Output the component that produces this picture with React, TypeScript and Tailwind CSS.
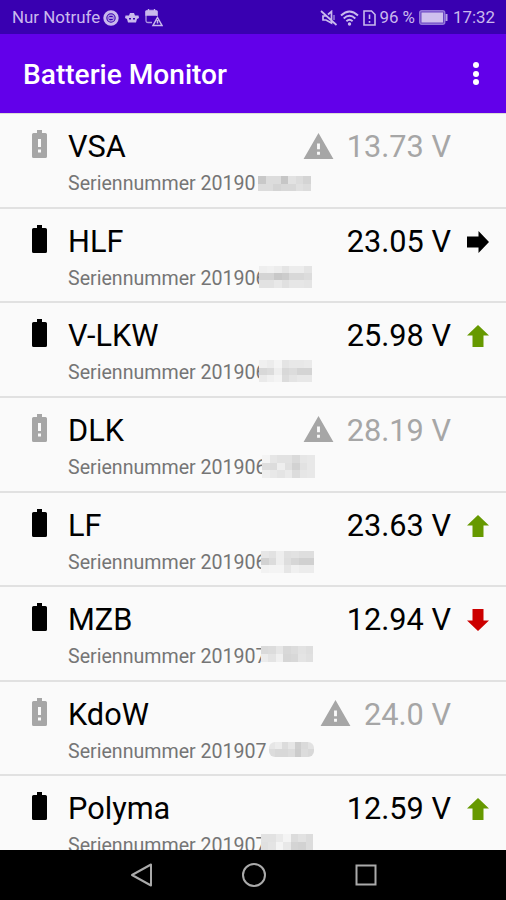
import { clsx } from 'clsx';

type Trend = 'up' | 'down' | 'steady' | 'unknown';

interface Battery {
  name: string;
  serial: string;
  voltage: string;
  trend: Trend;
  mask: { className: string; cells: string[] };
}

// Each mask entry is a run of grey levels, one hex digit pair per tile
const batteries: Battery[] = [
  {
    name: 'VSA',
    serial: '20190',
    voltage: '13.73 V',
    trend: 'unknown',
    mask: {
      className: 'left-[190px] top-[4px] w-[53px] h-[15px]',
      cells: ['c8 dc dc c6 e2 dc d4', 'dc dc d4 d8 d8 e0 dc'],
    },
  },
  {
    name: 'HLF',
    serial: '201906',
    voltage: '23.05 V',
    trend: 'steady',
    mask: {
      className: 'left-[191px] top-[-1px] w-[53px] h-[22px]',
      cells: ['ee f0 ec e4 ec ec e4', 'd4 d4 c8 cc d8 d8 dc', 'e2 e2 e8 e0 e6 e6 e4'],
    },
  },
  {
    name: 'V-LKW',
    serial: '201906',
    voltage: '25.98 V',
    trend: 'up',
    mask: {
      className: 'left-[191px] top-[-1px] w-[53px] h-[22px]',
      cells: ['f0 ec f4 e4 e8 e8 ea', 'd8 dc ee d8 dc d4 d4', 'ea f0 f4 dc e4 e8 e8'],
    },
  },
  {
    name: 'DLK',
    serial: '201906',
    voltage: '28.19 V',
    trend: 'unknown',
    mask: {
      className: 'left-[194px] top-[-1px] w-[53px] h-[23px]',
      cells: ['f4 e6 e2 e2 da e6 e8', 'de dc ee e0 d2 e2 e8', 'ee e8 e4 ea dc e6 e8'],
    },
  },
  {
    name: 'LF',
    serial: '201906',
    voltage: '23.63 V',
    trend: 'up',
    mask: {
      className: 'left-[193px] top-[0px] w-[53px] h-[22px]',
      cells: ['e6 e2 ee e0 e2 de de', 'd2 dc ee de d6 d0 d0', 'f2 f4 f4 e6 f0 ec ec'],
    },
  },
  {
    name: 'MZB',
    serial: '201907',
    voltage: '12.94 V',
    trend: 'down',
    mask: {
      className: 'left-[193px] top-[1px] w-[52px] h-[16px]',
      cells: ['da dc e6 d8 dc e2 de', 'ec e4 f0 d6 d8 e4 e0'],
    },
  },
  {
    name: 'KdoW',
    serial: '201907',
    voltage: '24.0 V',
    trend: 'unknown',
    mask: {
      className: 'left-[201px] top-[2px] w-[45px] h-[15px] rounded-md',
      cells: ['e6 ec dc e6 ce da e2', 'dc d8 d8 dc cc dc d8'],
    },
  },
  {
    name: 'Polyma',
    serial: '201907',
    voltage: '12.59 V',
    trend: 'up',
    mask: {
      className: 'left-[193px] top-[0px] w-[52px] h-[16px]',
      cells: ['e2 e2 ea f4 dc e2 dc', 'e0 e4 f4 e8 d4 d2 dc'],
    },
  },
];

function BatteryIcon({ alert }: { alert: boolean }) {
  return (
    <svg viewBox="0 0 15 28" className={clsx('h-7 w-[15px]', alert ? 'text-[#a6a6a6]' : 'text-black')}>
      <path
        fill="currentColor"
        fillRule="evenodd"
        d={
          alert
            ? 'M5 0h5v3h3.4Q15 3 15 4.5v22Q15 28 13.4 28H1.6Q0 28 0 26.5V4.5Q0 3 1.6 3H5zM6 9v8h3V9zM6 19.5v3h3v-3z'
            : 'M5 0h5v3h3.4Q15 3 15 4.5v22Q15 28 13.4 28H1.6Q0 28 0 26.5V4.5Q0 3 1.6 3H5z'
        }
      />
    </svg>
  );
}

function WarningIcon() {
  return (
    <svg viewBox="0 0 31 27" className="mb-[3px] h-[26px] w-[31px] text-[#a6a6a6]">
      <path fill="currentColor" fillRule="evenodd" d="M15.5 0 31 27H0zM14 11v6h3v-6zM14 19.5v3h3v-3z" />
    </svg>
  );
}

function TrendArrow({ trend }: { trend: Trend }) {
  if (trend === 'unknown') return null;
  return (
    <svg
      viewBox="0 0 22 22"
      className={clsx(
        'size-[22px]',
        trend === 'up' && 'text-[#669900]',
        trend === 'down' && 'rotate-180 text-[#cc0000]',
        trend === 'steady' && 'rotate-90 text-black',
      )}
    >
      <path fill="currentColor" d="M11 0 22 10.5H16.5V22H5.5V10.5H0z" />
    </svg>
  );
}

function SerialMask({ className, cells }: Battery['mask']) {
  return (
    <span className={clsx('absolute flex flex-col overflow-hidden', className)}>
      {cells.map((row, i) => (
        <span key={i} className="flex flex-1">
          {row.split(' ').map((level, j) => (
            <span key={j} className="flex-1" style={{ backgroundColor: `#${level}${level}${level}` }} />
          ))}
        </span>
      ))}
    </span>
  );
}

function BatteryRow({ battery }: { battery: Battery }) {
  const stale = battery.trend === 'unknown';

  return (
    <li className="flex h-[94.65px] shrink-0 border-b-2 border-[#e1e1e1] pl-8">
      <div className="w-9 pt-[16px]">
        <BatteryIcon alert={stale} />
      </div>
      <div className="flex-1 pt-[15px]">
        <div className="flex h-9 items-center">
          <span className="flex-1 text-[30.7px] leading-9 text-black">{battery.name}</span>
          {stale && <WarningIcon />}
          <span className={clsx('ml-[13px] text-[30.7px] leading-9', stale ? 'text-[#a6a6a6]' : 'text-black')}>
            {battery.voltage}
          </span>
          <span className="flex w-[55px] justify-center pr-px">
            <TrendArrow trend={battery.trend} />
          </span>
        </div>
        <p className="relative mt-[7px] text-[19.6px] leading-6 text-[#757575]">
          Seriennummer {battery.serial}
          <SerialMask {...battery.mask} />
        </p>
      </div>
    </li>
  );
}

function StatusBar() {
  return (
    <div className="flex h-[34px] shrink-0 items-center bg-[#3900b1] pt-[2px] pl-3 pr-[11px] text-[16.9px] text-[#c9b9ed]">
      <span>Nur Notrufe</span>
      <svg viewBox="0 0 16 16" className="ml-[3px] size-4" fill="none" stroke="currentColor">
        <circle cx="8" cy="8" r="6.2" strokeWidth="3" />
        <circle cx="8" cy="8" r="3" strokeWidth="1.3" opacity=".8" />
        <path d="M6 8h4" strokeWidth="1.5" />
      </svg>
      <svg viewBox="0 0 14 12" className="ml-[6px] h-3 w-3.5" fill="currentColor">
        <path
          fillRule="evenodd"
          d="M5 1h4l1 2.5h3.500L14 6l-2 1-1 3.500H3L2 7 0 6l.5-2.500H4zM4 6v1.500h2V6zM8 6v1.500h2V6z"
        />
      </svg>
      <svg viewBox="0 0 18 18" className="ml-[6px] size-[18px]" fill="none" stroke="currentColor" strokeWidth="1.3">
        <path d="M7 13.500H3q-2 0-2-2V3q0-1.500 2-1.500h7q2 0 2 1.500v4" opacity=".8" />
        <path d="M1 2.500h11v3.500H1zM3.500 0v3M9.500 0v3" fill="currentColor" />
        <path d="m12.500 8.500 4.500 8H8zM12.500 11v3.500" strokeWidth="1.500" />
      </svg>

      <div className="ml-auto flex items-center">
        <svg viewBox="0 0 18 16" className="h-4 w-[18px]" fill="none" stroke="currentColor" strokeWidth="1.7">
          <path d="M8 4.500 11.500 1.500V13L6 10H3V6h3M1 1l15.500 14" />
          <path d="M14 5v5" strokeWidth="1" />
        </svg>
        <svg viewBox="0 0 19 16" className="ml-[2px] h-4 w-[19px]" fill="none" stroke="currentColor" strokeWidth="1.9">
          <path d="M1 5.500q8.500-8 17 0M3.700 8.500q5.800-5.500 11.600 0M6.400 11.300q3.100-3 6.200 0" />
          <circle cx="9.500" cy="14" r="1.700" fill="currentColor" stroke="none" />
        </svg>
        <svg viewBox="0 0 13 16" className="ml-[4px] h-4 w-[13px]" fill="none" stroke="currentColor" strokeWidth="1.6">
          <path d="M1 1h7.500L12 4.500V15H1zM6.500 4.500v4.500M6.500 11v1.700" />
        </svg>
        <span className="ml-[3px]">96 %</span>
        <svg viewBox="0 0 29 15" className="ml-[4px] h-[15px] w-[29px]">
          <rect x=".7" y=".7" width="25" height="13.600" rx="2" fill="#6a45c4" stroke="#9378da" strokeWidth="1.400" />
          <rect x="2.500" y="2.500" width="21.500" height="10" fill="#cfc0ee" />
          <path d="M26.500 4h2v7h-2z" fill="#b7a3e5" />
        </svg>
        <span className="ml-[5px]">17:32</span>
      </div>
    </div>
  );
}

function AppBar() {
  return (
    <header className="flex h-[79px] shrink-0 items-center justify-between bg-[#6200ea] pl-[23px] pr-[27px] text-white">
      <h1 className="pt-[3px] text-[28.1px] font-medium">Batterie Monitor</h1>
      <button aria-label="Menü" className="flex flex-col gap-[2.5px]">
        <span className="size-[6px] rounded-full bg-white" />
        <span className="size-[6px] rounded-full bg-white" />
        <span className="size-[6px] rounded-full bg-white" />
      </button>
    </header>
  );
}

function NavigationBar() {
  return (
    <nav className="flex h-[50px] shrink-0 items-center justify-center gap-[88px] bg-black pl-px text-[#aaaaaa]">
      <svg viewBox="0 0 24 24" className="size-6" fill="none" stroke="currentColor" strokeWidth="2">
        <path d="M21 1.5v21L2 12z" strokeLinejoin="round" />
      </svg>
      <svg viewBox="0 0 24 24" className="size-6" fill="none" stroke="currentColor" strokeWidth="2">
        <circle cx="12" cy="12" r="11" />
      </svg>
      <svg viewBox="0 0 24 24" className="size-6" fill="none" stroke="currentColor" strokeWidth="2">
        <rect x="2.5" y="2.5" width="19" height="19" />
      </svg>
    </nav>
  );
}

export default function App() {
  return (
    <div className="flex h-[900px] w-[506px] flex-col overflow-hidden bg-[#fafafa] font-['Roboto',sans-serif]">
      <StatusBar />
      <AppBar />
      <ul className="flex min-h-0 flex-1 flex-col overflow-hidden border-t border-[#dcdcd6] bg-[#fafafa]">
        {batteries.map((battery) => (
          <BatteryRow key={battery.name} battery={battery} />
        ))}
      </ul>
      <NavigationBar />
    </div>
  );
}
